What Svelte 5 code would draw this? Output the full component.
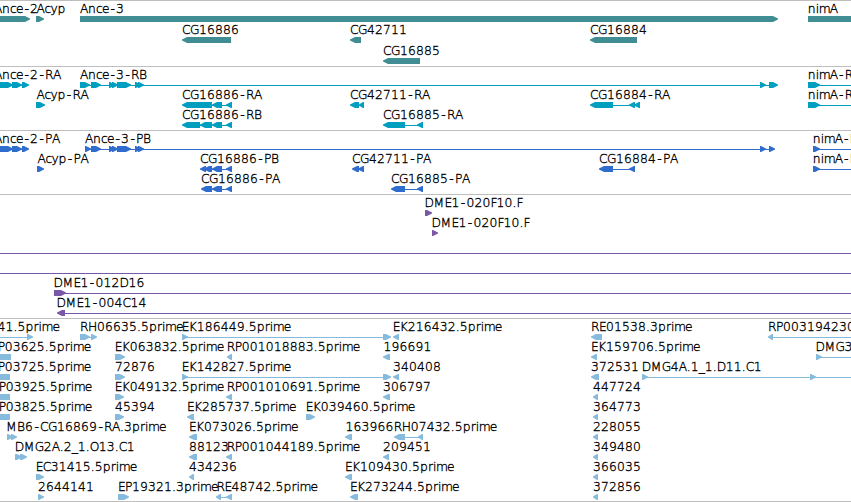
<script lang="ts">
  type Feature = {
    row: number;
    label?: string;
    lx?: number;
    dir?: "l" | "r" | "none";
    parts?: number[][];
    line?: number[];
  };

  interface Track {
    name: string;
    height: number;
    step: number;
    features: Feature[];
  }

  const WIDTH = 851;
  const OFF = 860; // past the right edge

  // advance of each glyph, whole pixels
  const advances: Record<string, number> = {
    ".": 4, "-": 7, _: 6, A: 8, B: 8, C: 8, D: 9, E: 7, F: 6, G: 9, H: 9,
    K: 8, M: 11, O: 9, P: 7, R: 8, c: 6, e: 7, i: 3, m: 11, n: 8, p: 8,
    r: 5, y: 7,
  };

  function glyphs(label: string, start: number) {
    let x = start + 0.4;
    const xs: number[] = [];
    for (const ch of label) {
      // the dash sits in the middle of its cell
      xs.push(ch === "-" ? x + 1.3 : x);
      x += advances[ch] ?? 8;
    }
    return xs.join(" ");
  }

  function f(row: number, label: string, lx: number, dir: "l" | "r" | "none", parts: number[][], line?: number[]): Feature {
    return { row, label, lx, dir, parts, line };
  }

  function arrow(a: number, b: number, dir: string | undefined, y: number) {
    const head = Math.min(6, b - a);
    if (dir === "r") {
      return `${a},${y} ${b - head + 1},${y} ${b},${y + 2.5} ${b},${y + 3.5} ${b - head + 1},${y + 6} ${a},${y + 6}`;
    }
    if (dir === "l") {
      return `${b},${y} ${a + head - 1},${y} ${a},${y + 2.5} ${a},${y + 3.5} ${a + head - 1},${y + 6} ${b},${y + 6}`;
    }
    return `${a},${y} ${b},${y} ${b},${y + 6} ${a},${y + 6}`;
  }

  // connector between the parts, or the explicit span
  function span(feat: Feature) {
    if (feat.line) return feat.line;
    const p = feat.parts ?? [];
    if (p.length < 2) return null;
    return [p[0][0] + 3, p[p.length - 1][1] - 3];
  }

  const ance3 = [[91, 101], [109, 115], [112, 118], [117, 131], [135, 141], [138, 144]];

  const tracks: Track[] = [
    {
      name: "gene",
      height: 66,
      step: 21,
      features: [
        f(0, "Ance-2", -6.3, "r", [[-10, 30]]),
        f(0, "Acyp", 36, "r", [[36, 44]]),
        f(0, "Ance-3", 79.7, "r", [[80, 778]]),
        f(0, "nimA", 807.3, "r", [[808, OFF + 10]]),
        f(1, "CG16886", 181.5, "l", [[182, 231]]),
        f(1, "CG42711", 349.5, "l", [[350, 361]]),
        f(1, "CG16884", 589.5, "l", [[590, 637]]),
        f(2, "CG16885", 382.5, "l", [[383, 420]]),
      ],
    },
    {
      name: "mrna",
      height: 64,
      step: 20,
      features: [
        f(0, "Ance-2-RA", -6.3, "r", [[-4, 13], [12, 22], [22, 29]]),
        f(0, "Ance-3-RB", 79.7, "r", [[80, 90], ...ance3, [760, 766], [769, 778]]),
        f(0, "nimA-RA", 807.3, "r", [[808, 820]], [815, OFF]),
        f(1, "Acyp-RA", 36, "r", [[36, 45]]),
        f(1, "CG16886-RA", 181.5, "l", [[182, 212], [212, 222], [226, 232]]),
        f(1, "CG42711-RA", 349.5, "l", [[350, 359], [359, 364]]),
        f(1, "CG16884-RA", 589.5, "l", [[590, 613], [629, 635], [634, 640]]),
        f(1, "nimA-RB", 807.3, "r", [[808, 820]], [815, OFF]),
        f(2, "CG16886-RB", 181.5, "l", [[182, 200], [200, 212], [212, 222], [226, 232]]),
        f(2, "CG16885-RA", 382.5, "l", [[383, 405], [417, 423]]),
      ],
    },
    {
      name: "protein",
      height: 64,
      step: 20,
      features: [
        f(0, "Ance-2-PA", -6.3, "r", [[-4, 13], [12, 22], [22, 29]]),
        f(0, "Ance-3-PB", 84.7, "r", [[85, 91], ...ance3, [760, 766], [769, 775]]),
        f(0, "nimA-PA", 812.3, "r", [[813, 820]], [815, OFF]),
        f(1, "Acyp-PA", 37, "r", [[37, 44]]),
        f(1, "CG16886-PB", 199.5, "l", [[200, 206], [204, 212], [212, 222], [226, 232]]),
        f(1, "CG42711-PA", 351.5, "l", [[352, 359], [358, 364]]),
        f(1, "CG16884-PA", 598.5, "l", [[599, 613], [629, 635]]),
        f(1, "nimA-PB", 812.3, "r", [[813, 820]], [815, OFF]),
        f(2, "CG16886-PA", 200.5, "l", [[201, 212], [212, 222], [226, 232]]),
        f(2, "CG16885-PA", 390.5, "l", [[391, 405], [417, 423]]),
      ],
    },
    {
      name: "clone",
      height: 124,
      step: 20,
      features: [
        f(0, "DME1-020F10.F", 424, "r", [[425, 432]]),
        f(1, "DME1-020F10.F", 431, "r", [[432, 438]]),
        { row: 2, line: [0, OFF] },
        { row: 3, line: [0, OFF] },
        f(4, "DME1-012D16", 53, "r", [[54, 66]], [60, OFF]),
        f(5, "DME1-004C14", 56, "l", [[57, 65]], [60, OFF]),
      ],
    },
    {
      name: "est",
      height: 183,
      step: 20,
      features: [
        f(0, "41.5prime", -3, "r", [[27, 33]], [0, 30]),
        f(0, "RH06635.5prime", 79.5, "r", [[80, 90], [91, 97]]),
        f(0, "EK186449.5prime", 181.3, "r", [[182, 188], [383, 391]]),
        f(0, "EK216432.5prime", 392.3, "l", [[393, 399]]),
        f(0, "RE01538.3prime", 590.5, "l", [[591, 602]]),
        f(0, "RP003194230", 767.5, "l", [[768, 773]], [770, OFF]),

        f(1, "P03625.5prime", -2.7, "none", [[0, 11]]),
        f(1, "EK063832.5prime", 114.3, "r", [[115, 125]]),
        f(1, "RP001018883.5prime", 226.3, "l", [[227, 232]]),
        f(1, "196691", 383, "l", [[383, 390]]),
        f(1, "EK159706.5prime", 590.5, "l", [[591, 597]]),
        f(1, "DMG3", 815.2, "r", [[816, 822]], [818, OFF]),

        f(2, "P03725.5prime", -2.7, "none", [[0, 10]]),
        f(2, "72876", 114.7, "r", [[115, 125]]),
        f(2, "EK142827.5prime", 181.3, "r", [[182, 188], [383, 391]]),
        f(2, "340408", 392.5, "l", [[393, 399]]),
        f(2, "372531", 590.5, "l", [[591, 599]]),
        f(2, "DMG4A.1_1.D11.C1", 641.3, "r", [[642, 648], [810, 816]], [645, OFF]),

        f(3, "P03925.5prime", -1.7, "none", [[0, 10]]),
        f(3, "EK049132.5prime", 114.3, "r", [[115, 124]]),
        f(3, "RP001010691.5prime", 226.3, "l", [[226, 232]]),
        f(3, "306797", 382.5, "l", [[383, 390]]),
        f(3, "447724", 592.7, "l", [[593, 598]]),

        f(4, "P03825.5prime", -1.7, "none", [[0, 10]]),
        f(4, "45394", 114.7, "r", [[115, 124]]),
        f(4, "EK285737.5prime", 186.5, "l", [[187, 194]]),
        f(4, "EK039460.5prime", 305.3, "r", [[306, 315]]),
        f(4, "364773", 592.7, "l", [[593, 598]]),

        f(5, "MB6-CG16869-RA.3prime", 5.7, "r", [[7, 13], [11, 17]]),
        f(5, "EK073026.5prime", 188.5, "l", [[189, 197]]),
        f(5, "163966", 345, "l", [[345, 352]]),
        f(5, "RH07432.5prime", 393.3, "l", [[394, 405], [418, 423]]),
        f(5, "228055", 592.7, "l", [[593, 598]]),

        f(6, "DMG2A.2_1.O13.C1", 14.3, "r", [[15, 22], [20, 27]]),
        f(6, "88123", 188.7, "l", [[189, 197]]),
        f(6, "RP001044189.5prime", 226.3, "l", [[226, 232]]),
        f(6, "209451", 382.5, "l", [[383, 389]]),
        f(6, "349480", 592.7, "l", [[593, 598]]),

        f(7, "EC31415.5prime", 35.3, "r", [[36, 44]]),
        f(7, "434236", 188.7, "l", [[189, 194]]),
        f(7, "EK109430.5prime", 344.5, "l", [[345, 352]]),
        f(7, "366035", 592.7, "l", [[593, 598]]),

        f(8, "2644141", 37.7, "r", [[38, 44]]),
        f(8, "EP19321.3prime", 117.5, "r", [[118, 129]]),
        f(8, "RE48742.5prime", 216, "l", [[216, 221], [226, 232]]),
        f(8, "EK273244.5prime", 349.5, "l", [[350, 358]]),
        f(8, "372856", 592.7, "l", [[593, 598]]),
      ],
    },
  ];
</script>

<main class="browser">
  {#each tracks as track}
    <section class="track {track.name}">
      <svg width={WIDTH} height={track.height - 1} viewBox="0 1 {WIDTH} {track.height - 1}">
        {#each track.features as feat}
          {@const y = feat.row * track.step}
          {@const s = span(feat)}
          {#if s}
            <rect x={s[0]} y={y + 19} width={s[1] - s[0]} height="1" />
          {/if}
          {#each feat.parts ?? [] as part}
            <polygon points={arrow(part[0], part[1], feat.dir, y + 16)} />
          {/each}
          {#if feat.label}
            <text x={glyphs(feat.label, feat.lx ?? 0)} y={y + 13}>{feat.label}</text>
          {/if}
        {/each}
      </svg>
    </section>
  {/each}
</main>

<style>
  :global(body) {
    margin: 0;
    background: #fff;
    overflow: hidden;
  }
  .browser {
    display: flex;
    flex-direction: column;
    width: 851px;
    border-bottom: 1px solid #bebebe;
  }
  .track {
    border-top: 1px solid #bebebe;
  }
  svg {
    display: block;
  }
  rect,
  polygon {
    fill: var(--ink);
  }
  text {
    font-family: "DejaVu Sans Light", "DejaVu Sans", sans-serif;
    font-size: 12.3px;
    fill: #000;
    stroke: #000;
    stroke-width: 0.35px;
  }
  .gene {
    --ink: #408e94;
  }
  .mrna {
    --ink: #009ebf;
  }
  .protein {
    --ink: #306bce;
  }
  .clone {
    --ink: #7a58a8;
  }
  .est {
    --ink: #87bbde;
  }
</style>
